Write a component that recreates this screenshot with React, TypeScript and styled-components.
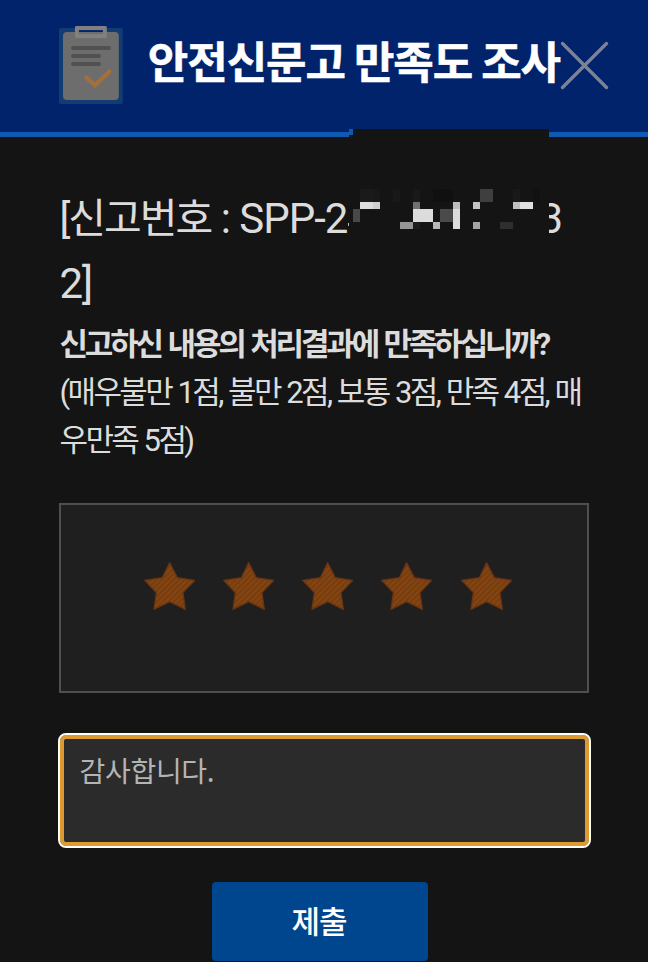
import React from 'react';
import styled, { createGlobalStyle } from 'styled-components';

const GlobalStyle = createGlobalStyle`
  * { box-sizing: border-box; }
  html, body { margin: 0; padding: 0; background: #141414; }
  body { font-family: Roboto, "Noto Sans CJK KR", sans-serif; overflow: hidden; }
`;

const Page = styled.div`
  position: relative;
  width: 648px;
  height: 962px;
  overflow: hidden;
  background: #141414;
  color: #dcdcdc;
`;

const Header = styled.header`
  display: flex;
  align-items: flex-start;
  height: 137px;
  padding: 26px 39px 0 59px;
  background: #00236c;
  border-bottom: 5px solid #0f5ab0;
`;

const Title = styled.h1`
  flex: 1;
  margin: 2px 0 0 25px;
  font-family: "Noto Sans CJK KR", sans-serif;
  font-size: 44px;
  line-height: 64px;
  font-weight: 700;
  letter-spacing: -1.05px;
  white-space: nowrap;
  color: #fff;
  -webkit-text-stroke: 0.5px #fff;
`;

const CloseButton = styled.button`
  display: flex;
  margin: 15px 0 0;
  padding: 0;
  border: 0;
  background: none;
`;

const Body = styled.main`
  display: flex;
  flex-direction: column;
  padding: 50px 59px 0;
`;

const ReportNumber = styled.p`
  margin: 0 0 4px;
  padding-left: 0.5px;
  font-size: 41px;
  line-height: 65px;
  letter-spacing: -2px;
  white-space: nowrap;
`;

const Code = styled.span`
  font-size: 42px;
  line-height: 1;
  letter-spacing: -1px;
`;

const Redacted = styled.span`
  display: inline-block;
  width: 192px;
`;

const Question = styled.p<{ $strong?: boolean }>`
  margin: 0;
  padding-left: 0.5px;
  font-size: 31px;
  line-height: 48px;
  letter-spacing: ${({ $strong }) => ($strong ? '-3.15px' : '-2.6px')};
  word-spacing: ${({ $strong }) => ($strong ? '2px' : '1.25px')};
  font-weight: ${({ $strong }) => ($strong ? 700 : 400)};
  white-space: nowrap;
`;

const Rating = styled.div`
  display: flex;
  justify-content: center;
  align-items: flex-start;
  gap: 28px;
  height: 190px;
  margin-top: 38px;
  padding: 57px 0 0 7.5px;
  border: 2px solid #4f4f4f;
  background: #1f1f1f;
`;

const Comment = styled.div`
  height: 115px;
  margin: 40px -1.5px 0;
  padding: 13px 20px;
  border: 2px solid #fffdf5;
  border-radius: 8px;
  background: #2b2b2b;
  box-shadow: inset 0 0 0 4px #dd9a30;
  color: #b4b4b4;
  font-family: "Noto Sans CJK KR", sans-serif;
  font-size: 28px;
  line-height: 44px;
  letter-spacing: -0.3px;
`;

const Submit = styled.button`
  align-self: center;
  width: 216px;
  height: 79px;
  margin: 34px 8px 0 0;
  padding: 0 2px 4px 0;
  border: 0;
  border-radius: 4px;
  background: #00468f;
  color: #fff;
  font-family: "Noto Sans CJK KR", sans-serif;
  font-size: 31px;
  font-weight: 500;
  letter-spacing: -1px;
`;

const Mosaic = styled.svg`
  position: absolute;
  left: 348px;
  top: 129px;
`;

/* x, y, width, height, colour; measured in thirds of a pixel */
const cells: [number, number, number, number, string][] = [
  [36, 180, 38, 39, '#1a1a1a'], [74, 180, 22, 39, '#181818'],
  [136, 180, 20, 39, '#181818'], [195, 180, 20, 39, '#191919'],
  [255, 180, 60, 39, '#101010'], [396, 180, 39, 39, '#3f3f3f'],
  [496, 180, 20, 39, '#191919'], [556, 180, 20, 39, '#111'],
  [36, 219, 39, 20, '#dcdcdc'], [75, 219, 21, 20, '#cfcfcf'],
  [195, 219, 20, 20, '#707070'], [315, 219, 21, 20, '#bcbcbc'],
  [375, 219, 21, 20, '#c4c4c4'], [495, 219, 21, 20, '#c0c0c0'],
  [516, 219, 39, 20, '#dfdfdf'], [15, 240, 21, 39, '#484848'],
  [195, 240, 60, 39, '#dcdcdc'], [276, 240, 39, 39, '#4a4a4a'],
  [315, 240, 21, 60, '#dcdcdc'], [156, 279, 39, 21, '#959595'],
  [195, 279, 20, 21, '#1e1e1e'], [255, 279, 21, 21, '#b8b8b8'],
  [375, 279, 21, 21, '#a5a5a5'], [456, 279, 39, 21, '#2e2e2e'],
];

const Clipboard = () => (
  <svg width="64" height="78" viewBox="0 0 64 78" fill="none">
    <rect y="2" width="64" height="76" rx="2" fill="#123d73" />
    <rect x="4" y="6" width="56" height="68" rx="4" fill="#6d6d6d" />
    <rect x="16" width="32" height="12" rx="1.500" fill="#808080" />
    <path d="M20 4H44V6H20Z" fill="#00236c" />
    <path d="M20 6H44V8H20Z" fill="#6d6d6d" />
    <path d="M14 22H50M14 30H40M14 38H40" stroke="#515152" strokeWidth="4" strokeLinecap="round" />
    <path d="M27.500 51.500L36 59.500L50.500 45.500" stroke="#a56f3a" strokeWidth="4.200" strokeLinecap="round" />
  </svg>
);

const Star = () => (
  <svg width="51.300" height="48" viewBox="-1 -1 154 144">
    <defs>
      <pattern id="stripe" width="12" height="12" patternUnits="userSpaceOnUse" patternTransform="rotate(45)">
        <rect width="12" height="12" fill="#854510" />
        <rect width="5" height="12" fill="#743b11" />
      </pattern>
    </defs>
    <path
      d="M76 1L99 46L151 54L116 91L123 141L76 118L29 141L36 91L1 54L54 46Z"
      fill="url(#stripe)" stroke="#673414" strokeWidth="4" strokeLinejoin="round"
    />
  </svg>
);

export default function App() {
  return (
    <Page>
      <GlobalStyle />
      <Header>
        <Clipboard />
        <Title>안전신문고 만족도 조사</Title>
        <CloseButton aria-label="닫기">
          <svg width="49" height="49" viewBox="0 0 49 49">
            <path d="M2.500 2.500L46.500 46.500M46.500 2.500L2.500 46.500" stroke="#7f8290" strokeWidth="3.400" strokeLinecap="round" />
          </svg>
        </CloseButton>
      </Header>
      <Body>
        <ReportNumber>
          [신고번호<Code> : SPP-2<Redacted />3</Code>
          <br />
          <Code>2]</Code>
        </ReportNumber>
        <Question $strong>신고하신 내용의 처리결과에 만족하십니까?</Question>
        <Question>(매우불만 1점, 불만 2점, 보통 3점, 만족 4점, 매<br />우만족 5점)</Question>
        <Rating>
          {[1, 2, 3, 4, 5].map((n) => <Star key={n} />)}
        </Rating>
        <Comment>감사합니다.</Comment>
        <Submit>제출</Submit>
      </Body>
      <Mosaic width="201" height="108" viewBox="0 0 603 324">
        <rect x="15" width="588" height="324" fill="#141414" />
        <rect x="3" width="12" height="306" fill="#141414" />
        <rect x="15" width="588" height="24" fill="#121514" />
        <rect x="3" width="12" height="18" fill="#0f5ab0" />
        <rect x="0" y="282" width="3" height="9" fill="#bbb" />
        {cells.map(([x, y, w, h, color]) => (
          <rect key={`${x}-${y}`} x={x} y={y} width={w} height={h} fill={color} shapeRendering="crispEdges" />
        ))}
      </Mosaic>
    </Page>
  );
}
